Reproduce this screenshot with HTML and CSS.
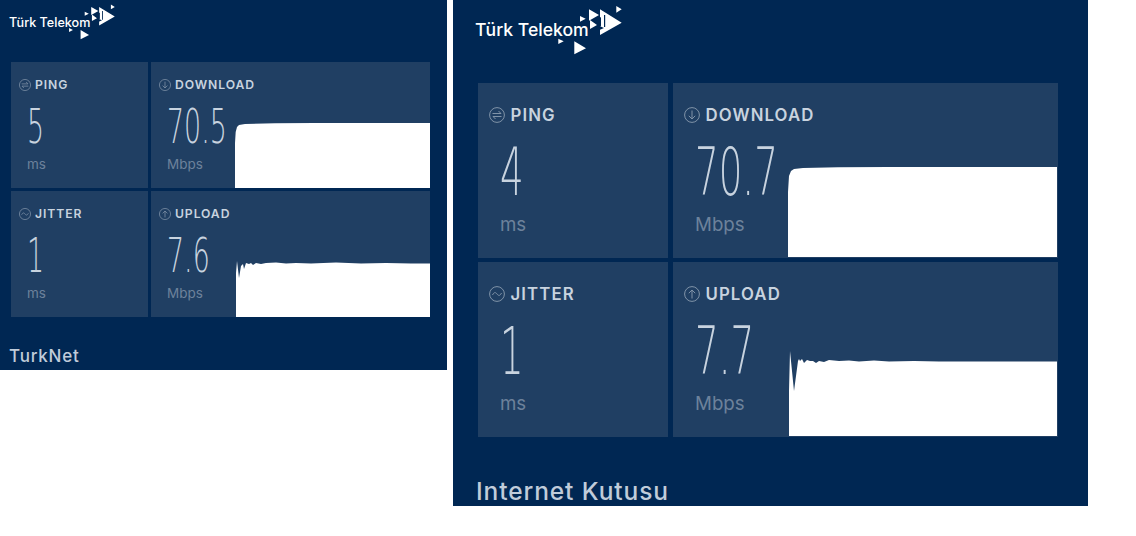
FILE: index.html
```html
<!DOCTYPE html>
<html lang="tr">
<head>
<meta charset="utf-8">
<title>Türk Telekom</title>
<link rel="stylesheet" href="styles.css">
</head>
<body>
<svg class="defs" aria-hidden="true">
  <symbol id="logo-mark" viewBox="0 0 147 55">
    <path fill="#fff" d="M125 9.3 146.7 22.7 125 35ZM114 9.3 124 15 114 20.700ZM141.300 6 146.700 9.300 141.300 12.700ZM105 16 110.700 18.700 105 21.700ZM83.300 38.700 88.700 41.300 83.300 44ZM99.300 41.300 111 48.300 99.300 54.300ZM115 20 122 25 115 29Z"/>
    <path fill="#002753" d="M119 21.500 126 17 126 26.500ZM124.500 26 129 28 124.500 30Z"/>
    <path fill="#002753" d="M129 15h1.200v12H129Z"/>
  </symbol>
  <symbol id="i-ping" viewBox="0 0 16 16">
    <circle cx="8" cy="8" r="7.400" fill="none" stroke="currentColor"/>
    <path fill="none" stroke="currentColor" d="M3.500 6.500h8.500L9.500 4M12.500 9.500H4L6.500 12"/>
  </symbol>
  <symbol id="i-jitter" viewBox="0 0 16 16">
    <circle cx="8" cy="8" r="7.400" fill="none" stroke="currentColor"/>
    <path fill="none" stroke="currentColor" d="M3.500 9c1.500-3 3-3 4.500-1s3 2 4.500-1"/>
  </symbol>
  <symbol id="i-down" viewBox="0 0 16 16">
    <circle cx="8" cy="8" r="7.400" fill="none" stroke="currentColor"/>
    <path fill="none" stroke="currentColor" d="M8 3.500v8.500M4.800 8.800 8 12l3.200-3.200"/>
  </symbol>
  <symbol id="i-up" viewBox="0 0 16 16">
    <circle cx="8" cy="8" r="7.400" fill="none" stroke="currentColor"/>
    <path fill="none" stroke="currentColor" d="M8 12.500V4M4.800 7.200 8 4l3.200 3.200"/>
  </symbol>
</svg>

<section class="panel panel-a">
  <div class="logo"><span class="logo-text">Türk Telekom</span><svg class="logo-mark"><use href="#logo-mark"/></svg></div>
  <div class="grid">
    <div class="cell">
      <div class="info">
        <div class="label"><svg class="icon"><use href="#i-ping"/></svg>PING</div>
        <div class="num"><span>5</span></div>
        <div class="unit">ms</div>
      </div>
    </div>
    <div class="cell">
      <div class="info">
        <div class="label"><svg class="icon"><use href="#i-down"/></svg>DOWNLOAD</div>
        <div class="num"><span>70.5</span></div>
        <div class="unit">Mbps</div>
      </div>
      <svg class="chart chart-down" viewBox="0 0 195 65" preserveAspectRatio="none"><path fill="#fff" d="M0 65V20L.7 9 2 4 4 2 10 1 40 .3 80 0H195V65Z"/></svg>
    </div>
    <div class="cell">
      <div class="info">
        <div class="label"><svg class="icon"><use href="#i-jitter"/></svg>JITTER</div>
        <div class="num"><span>1</span></div>
        <div class="unit">ms</div>
      </div>
    </div>
    <div class="cell">
      <div class="info info-up">
        <div class="label"><svg class="icon"><use href="#i-up"/></svg>UPLOAD</div>
        <div class="num"><span>7.6</span></div>
        <div class="unit">Mbps</div>
      </div>
      <svg class="chart chart-up" viewBox="0 0 194 56" preserveAspectRatio="none"><path fill="#fff" d="M0 56V12L1 0 3 17 5 5 7 3 8 8 10 2 13 3 15 2 17 4 20 2 25 3 30 2 40 1.500 50 2.500 60 2 75 2.500 100 1.500 125 2.500 150 2 175 2.500H194V56Z"/></svg>
    </div>
  </div>
  <h2 class="title">TurkNet</h2>
</section>

<section class="panel panel-b">
  <div class="logo"><span class="logo-text">Türk Telekom</span><svg class="logo-mark"><use href="#logo-mark"/></svg></div>
  <div class="grid">
    <div class="cell">
      <div class="info">
        <div class="label"><svg class="icon"><use href="#i-ping"/></svg>PING</div>
        <div class="num"><span>4</span></div>
        <div class="unit">ms</div>
      </div>
    </div>
    <div class="cell">
      <div class="info">
        <div class="label"><svg class="icon"><use href="#i-down"/></svg>DOWNLOAD</div>
        <div class="num"><span>70.7</span></div>
        <div class="unit">Mbps</div>
      </div>
      <svg class="chart chart-down" viewBox="0 0 269 90" preserveAspectRatio="none"><path fill="#fff" d="M0 90V25L1 9 3 4 6 2 15 1 50 .3 100 0H269V90Z"/></svg>
    </div>
    <div class="cell">
      <div class="info">
        <div class="label"><svg class="icon"><use href="#i-jitter"/></svg>JITTER</div>
        <div class="num"><span>1</span></div>
        <div class="unit">ms</div>
      </div>
    </div>
    <div class="cell">
      <div class="info info-up">
        <div class="label"><svg class="icon"><use href="#i-up"/></svg>UPLOAD</div>
        <div class="num"><span>7.7</span></div>
        <div class="unit">Mbps</div>
      </div>
      <svg class="chart chart-up" viewBox="0 0 268 85" preserveAspectRatio="none"><path fill="#fff" d="M0 85V40L1 0 5 40 9 10 10 8 11 10 13 8 15 12 18 9 21 10 24 10 27 12 30 10 35 11 40 9 50 10 60 9.500 70 10.500 85 9.500 100 10.500 125 10 150 10.500H268V85Z"/></svg>
    </div>
  </div>
  <h2 class="title">Internet Kutusu</h2>
</section>
</body>
</html>
```
FILE: styles.css
```css
html, body {
  margin: 0;
  background: #fff;
}

body {
  display: flex;
  align-items: flex-start;
  gap: 6px;
  width: 1136px;
  height: 536px;
  overflow: hidden;
  font-family: "Inter", "Liberation Sans", sans-serif;
}

.defs {
  display: none;
}

.panel {
  flex: none;
  box-sizing: border-box;
  background: #002753;
}

.panel-a {
  width: 447px;
  height: 370px;
  font-size: 10px;
}

.panel-b {
  width: 635px;
  height: 506px;
  font-size: 13.85px;
}

.logo {
  position: relative;
  font-weight: 500;
  color: #fff;
}

.panel-a .logo {
  height: 62px;
  margin-left: 9px;
}

.panel-b .logo {
  height: 83px;
  margin-left: 22px;
}

.logo-text {
  display: block;
  white-space: nowrap;
}

.panel-a .logo-text {
  padding-top: 15px;
  font-size: 12.6px;
  line-height: 16px;
}

.panel-b .logo-text {
  padding-top: 19px;
  font-size: 17.6px;
  line-height: 22px;
}

.logo-mark {
  position: absolute;
  left: 0;
  top: 0;
}

.panel-a .logo-mark {
  width: 106px;
  height: 40px;
}

.panel-b .logo-mark {
  width: 147px;
  height: 55px;
}

.grid {
  display: grid;
}

.panel-a .grid {
  grid-template-columns: 137px 279px;
  grid-template-rows: 126px 126px;
  gap: 3px;
  margin-left: 11px;
}

.panel-b .grid {
  grid-template-columns: 190px 385px;
  grid-template-rows: 175px 175px;
  gap: 4px 5px;
  margin-left: 25px;
}

.cell {
  display: flex;
  min-width: 0;
  background: #203f63;
}

.info {
  flex: none;
  padding-top: 1.5em;
  box-sizing: border-box;
}

.panel-a .info {
  width: 84px;
}

.panel-b .info {
  width: 115px;
}

.panel-a .info-up {
  width: 85px;
}

.panel-b .info-up {
  width: 116px;
}

.label {
  display: flex;
  align-items: center;
  font-weight: 600;
  color: #c8d3df;
}

.panel-a .label {
  font-size: 12.2px;
  letter-spacing: .9px;
  padding-left: 8px;
  gap: 4px;
  line-height: 16px;
}

.panel-b .label {
  font-size: 16.8px;
  letter-spacing: 1.1px;
  padding-left: 11px;
  gap: 5.500px;
  line-height: 22px;
}

.icon {
  flex: none;
  color: #8093a8;
}

.panel-a .icon {
  width: 12px;
  height: 12px;
}

.panel-b .icon {
  width: 16px;
  height: 16px;
}

.num {
  margin-top: .94em;
  line-height: 1;
}

.panel-a .num {
  padding-left: 16px;
}

.panel-b .num {
  padding-left: 22px;
}

.num span {
  display: inline-block;
  font-family: "DejaVu Sans", sans-serif;
  font-weight: 200;
  font-size: 4.8em;
  line-height: 1;
  color: #c8d3df;
  transform: scaleX(.56);
  transform-origin: left;
}

.unit {
  color: #6d829b;
}

.panel-a .unit {
  margin-top: 5px;
  padding-left: 16px;
  font-size: 13.5px;
  line-height: 19px;
}

.panel-b .unit {
  margin-top: 6.500px;
  padding-left: 22px;
  font-size: 18.7px;
  line-height: 26px;
}

.chart {
  flex: 1;
  min-width: 0;
  align-self: flex-end;
}

.chart-down {
  height: 6.5em;
}

.panel-a .chart-up {
  height: 5.6em;
}

.panel-b .chart-up {
  height: 6.14em;
}

.panel-b .chart {
  margin: 0 1px 1px 0;
}

.title {
  margin: 0;
  font-weight: 500;
  color: #c0ccda;
}

.panel-a .title {
  margin: 27px 0 0 9px;
  font-size: 17px;
  letter-spacing: .8px;
  line-height: 24px;
}

.panel-b .title {
  margin: 37px 0 0 23px;
  font-size: 24.5px;
  letter-spacing: .9px;
  line-height: 34px;
}
```
